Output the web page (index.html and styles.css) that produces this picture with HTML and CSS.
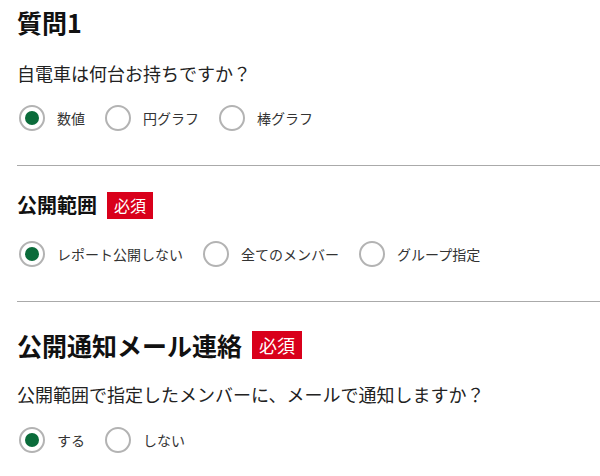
FILE: index.html
```html
<!DOCTYPE html>
<html lang="ja">
<head>
    <meta charset="UTF-8">
    <meta name="viewport" content="width=device-width, initial-scale=1.0">
    <title>アンケート設定</title>
    <link rel="stylesheet" href="styles.css">
</head>
<body>
    <div class="page">
        <section class="block block-first">
            <h2 class="title title-lg">質問1</h2>
            <p class="question">自電車は何台お持ちですか？</p>
            <div class="options">
                <label class="option"><input type="radio" name="chart" checked><span>数値</span></label>
                <label class="option"><input type="radio" name="chart"><span>円グラフ</span></label>
                <label class="option"><input type="radio" name="chart"><span>棒グラフ</span></label>
            </div>
        </section>

        <hr class="divider">

        <section class="block">
            <h3 class="title title-md">公開範囲<span class="badge">必須</span></h3>
            <div class="options options-close">
                <label class="option"><input type="radio" name="scope" checked><span>レポート公開しない</span></label>
                <label class="option"><input type="radio" name="scope"><span>全てのメンバー</span></label>
                <label class="option"><input type="radio" name="scope"><span>グループ指定</span></label>
            </div>
        </section>

        <hr class="divider">

        <section class="block">
            <h2 class="title title-xl">公開通知メール連絡<span class="badge badge-lg">必須</span></h2>
            <p class="question question-close">公開範囲で指定したメンバーに、メールで通知しますか？</p>
            <div class="options options-wide">
                <label class="option"><input type="radio" name="mail" checked><span>する</span></label>
                <label class="option"><input type="radio" name="mail"><span>しない</span></label>
            </div>
        </section>
    </div>
</body>
</html>
```

FILE: styles.css
```css
body {
    margin: 0;
    font-family: "Noto Sans CJK JP", "Noto Sans", sans-serif;
    color: #222;
    background: #fff;
}
.page {
    padding-left: 17px;
}
.block {
    display: flex;
    flex-direction: column;
    align-items: flex-start;
    padding-top: 24px;
    padding-bottom: 34px;
}
.block-first {
    padding-top: 4px;
}
.title {
    display: flex;
    align-items: center;
    margin: 0;
    color: #111;
    font-weight: bold;
}
.title-lg {
    font-size: 25px;
    line-height: 36px;
}
.title-md {
    font-size: 20px;
    line-height: 30px;
}
.title-xl {
    font-size: 25px;
    line-height: 38px;
}
.badge {
    margin-left: 10px;
    padding: 3px 7px;
    background-color: #d9001b;
    color: #fff;
    font-size: 16px;
    line-height: 21px;
    font-weight: normal;
}
.badge-lg {
    font-size: 18px;
    line-height: 22px;
}
.question {
    margin: 20px 0 0 0;
    font-size: 18px;
    line-height: 27px;
}
.question-close {
    margin-top: 17px;
}
.options {
    display: flex;
    align-items: center;
    margin-top: 18px;
    margin-left: 2px;
}
.options-close {
    margin-top: 21px;
}
.options-wide {
    margin-top: 19px;
}
.option {
    display: flex;
    align-items: center;
    margin-right: 20px;
    font-size: 14px;
    color: #333;
    cursor: pointer;
}
.option input {
    appearance: none;
    -webkit-appearance: none;
    box-sizing: border-box;
    width: 26px;
    height: 26px;
    margin: 0 12px 0 0;
    border: 2px solid #b3b3b3;
    border-radius: 50%;
    display: flex;
    align-items: center;
    justify-content: center;
}
.option input:checked::after {
    content: "";
    width: 14px;
    height: 14px;
    border-radius: 50%;
    background-color: #0a6b3a;
}
.divider {
    margin: 0;
    border: none;
    border-top: 1px solid #aaa;
}
```
